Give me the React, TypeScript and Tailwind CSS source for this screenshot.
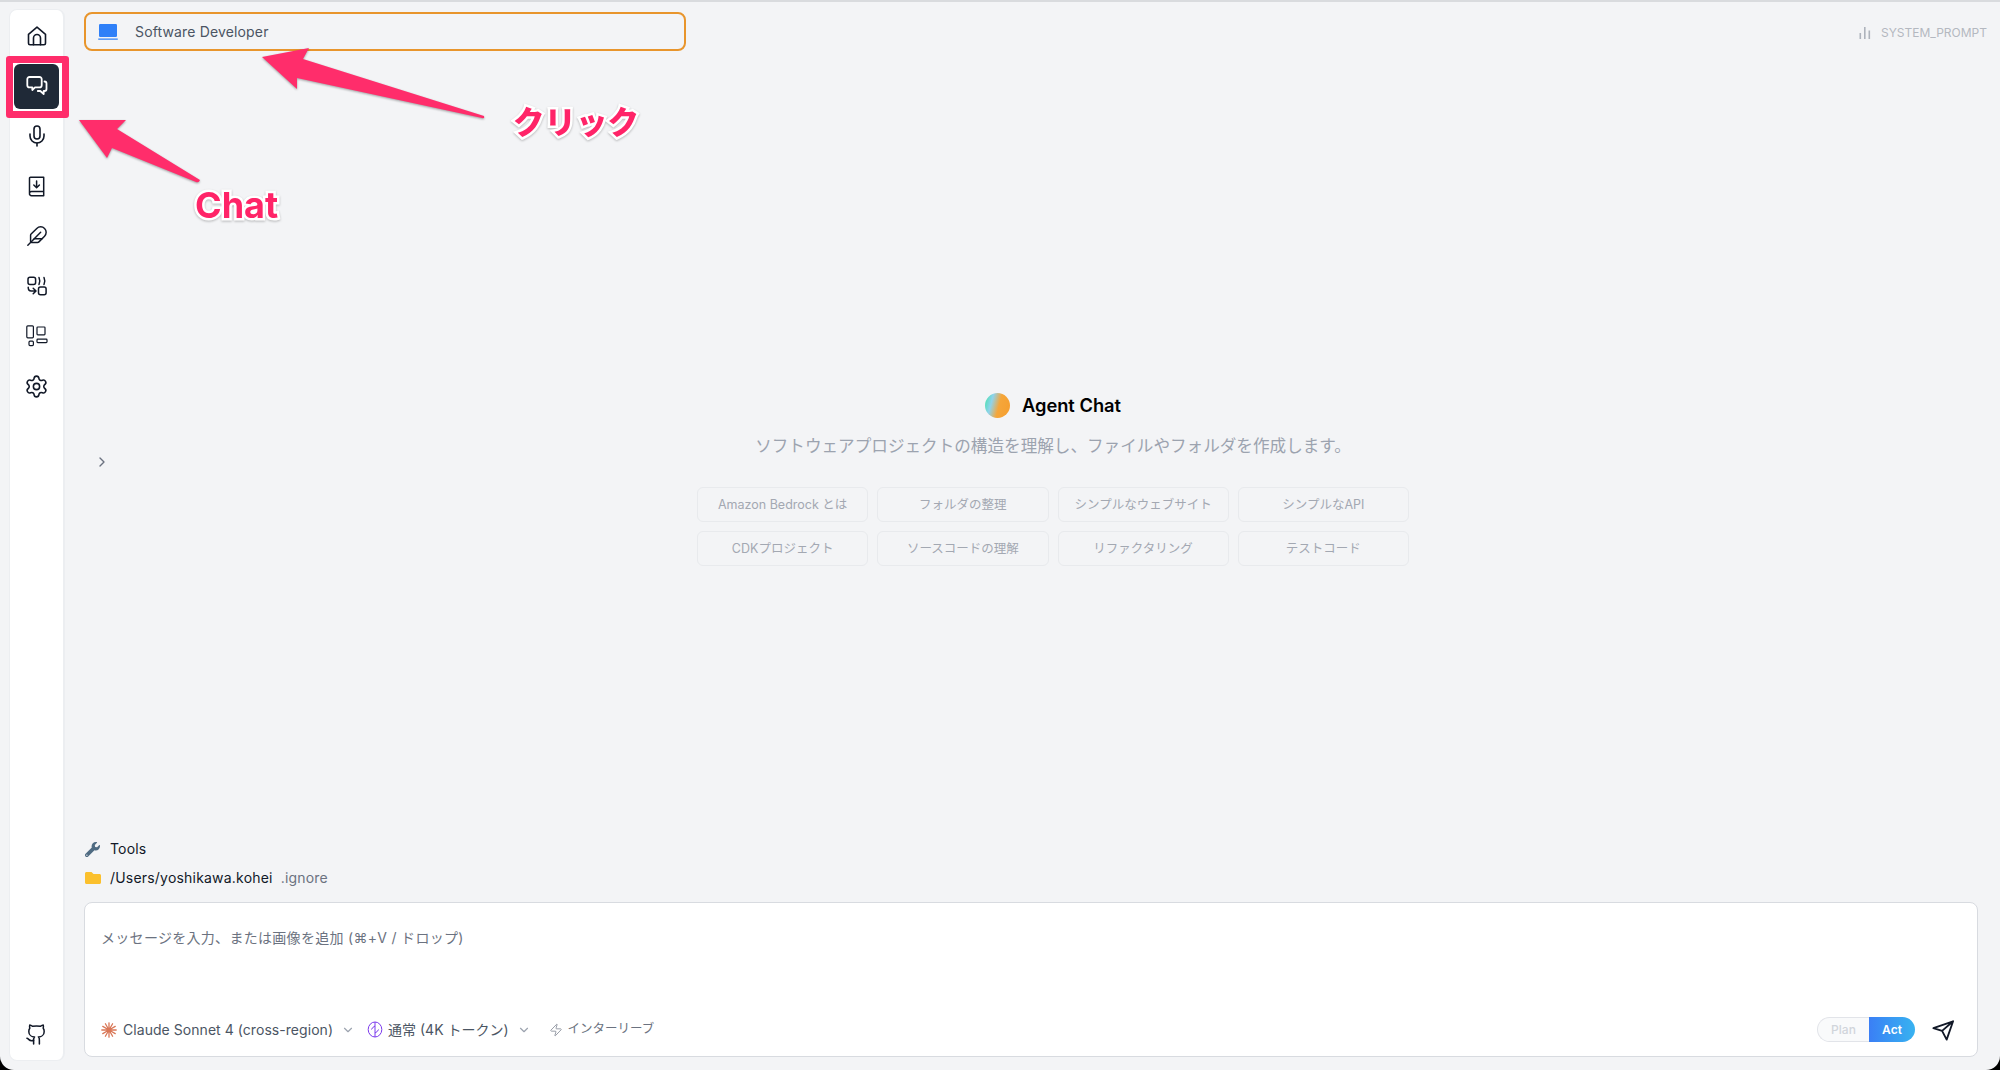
import { ChevronDown, ChevronRight, Feather, Github, Mic, Settings, Zap } from 'lucide-react'
import { FaFolder, FaWrench } from 'react-icons/fa'

const chips = [
  'Amazon Bedrock とは',
  'フォルダの整理',
  'シンプルなウェブサイト',
  'シンプルなAPI',
  'CDKプロジェクト',
  'ソースコードの理解',
  'リファクタリング',
  'テストコード',
]

function HomeIcon() {
  return (
    <svg width="20" height="20" viewBox="0 0 20 20" fill="none" stroke="currentColor" strokeWidth="1.6" strokeLinejoin="round" strokeLinecap="round">
      <path d="M10 1.200 18.500 8.300V17.300a1.500 1.500 0 0 1-1.500 1.500H3a1.500 1.500 0 0 1-1.500-1.500V8.300Z" />
      <path d="M6.500 18.800V12a3.500 3.500 0 0 1 7 0v6.800" />
    </svg>
  )
}

function ChatsIcon() {
  return (
    <svg width="22" height="22" viewBox="0 0 22 22" fill="none" stroke="currentColor" strokeWidth="1.800" strokeLinejoin="round" strokeLinecap="round">
      <path d="M3.500 2h10a2.200 2.200 0 0 1 2.200 2.200v6a2.200 2.200 0 0 1-2.200 2.200H9l-2.700 2.600v-2.600H3.500a2.200 2.200 0 0 1-2.200-2.200v-6A2.200 2.200 0 0 1 3.500 2Z" />
      <path d="M18.500 6.500a2 2 0 0 1 2 2v5.500a2 2 0 0 1-2 2h-.8v3l-3.400-3h-2.500" />
    </svg>
  )
}

function BookIcon() {
  return (
    <svg width="17" height="21" viewBox="0 0 17 21" fill="none" stroke="currentColor" strokeWidth="1.500" strokeLinejoin="round" strokeLinecap="round">
      <path d="M1.500 17.500V2.200a1 1 0 0 1 1-1h13.200v18.600H3.500a2 2 0 0 1-2-2.300 2 2 0 0 1 2-2h12.200" />
      <path d="M8.600 5v6.500M5.800 9l2.800 2.800L11.400 9" />
    </svg>
  )
}

function SwapIcon() {
  return (
    <svg width="20" height="20" viewBox="0 0 20 20" fill="none" stroke="currentColor" strokeWidth="1.500" strokeLinecap="round" strokeLinejoin="round">
      <rect x="1" y="1.200" width="7.600" height="7.400" rx="2" />
      <path d="M12 1.500q1.600 3.500 0 7M17 1.500q1.600 3.500 0 7" />
      <rect x="11.500" y="11" width="7.600" height="7.800" rx="2" />
      <path d="M1.200 11.200q0 3.800 3 3.800h4.600M6.200 12.200l2.800 2.800-2.800 2.800" />
    </svg>
  )
}

function PanelsIcon() {
  return (
    <svg width="22" height="22" viewBox="0 0 22 22" fill="none" stroke="currentColor" strokeWidth="1.200" strokeLinejoin="round">
      <rect x="0.800" y="0.800" width="6.600" height="12" rx="1" />
      <rect x="3" y="16.200" width="4.400" height="4.400" rx="1" />
      <rect x="11" y="2" width="8" height="7.800" rx="0.800" />
      <rect x="11" y="14.200" width="10" height="3.400" rx="0.800" />
    </svg>
  )
}

function LaptopIcon() {
  return (
    <svg width="20" height="16" viewBox="0 0 20 16" fill="#2f80f8">
      <rect x="1" y="0" width="18" height="13" rx="1.200" />
      <rect x="0" y="14.400" width="20" height="1.400" rx="0.700" />
    </svg>
  )
}

function BarsIcon() {
  return (
    <svg width="12" height="12" viewBox="0 0 12 12" fill="#aeb3bc">
      <rect x="0.500" y="6" width="1.600" height="6" />
      <rect x="5" y="0" width="1.600" height="12" />
      <rect x="9.500" y="3.500" width="1.600" height="8.500" />
    </svg>
  )
}

function ClaudeIcon() {
  const rays = [0, 30, 60, 90, 120, 150, 180, 210, 240, 270, 300, 330]
  return (
    <svg width="16" height="16" viewBox="0 0 16 16" stroke="#d97757" strokeWidth="1.300" strokeLinecap="round">
      {rays.map((r) => (
        <line key={r} x1="8" y1="8" x2="8" y2="0.800" transform={`rotate(${r} 8 8)`} />
      ))}
      <circle cx="8" cy="8" r="2.600" fill="#d97757" stroke="none" />
    </svg>
  )
}

function BrainIcon() {
  return (
    <svg width="16" height="17" viewBox="0 0 16 17" fill="none" stroke="#7c3aed" strokeWidth="1">
      <ellipse cx="8" cy="8.500" rx="6.800" ry="7.500" />
      <path d="M8 1v15M8 5Q5 6.500 4.500 8.500M8 12Q11 10.500 11.500 8.500" />
    </svg>
  )
}

function SendIcon() {
  return (
    <svg width="22" height="22" viewBox="0 0 24 24" fill="none" stroke="#111827" strokeWidth="2" strokeLinejoin="round" strokeLinecap="round">
      <path d="M1.500 10 23 2.500 16 22.500 11 13 1.500 10ZM11 13 23 2.500" />
    </svg>
  )
}

function Annotations() {
  return (
    <>
      <svg className="pointer-events-none absolute left-0 top-0 drop-shadow-[0_1px_1px_rgba(0,0,0,0.35)]" width="700" height="240" fill="#ff2d6b">
        <path d="M262 57 309 48 303 59 484 116Q485 119 482 118L297 78 297 89Z" />
        <path d="M79 120 126 120 117 129 200 180Q199 183 196 182L112 148 107 158Z" />
      </svg>
      <div className="absolute left-[6px] top-[56px] h-[62px] w-[63px] rounded-[3px] border-[7px] border-[#ff2d6b]" />
      <div className="absolute left-[513px] top-[101px] text-[31.500px] leading-[44px] font-black text-[#ff2468] [-webkit-text-stroke:5px_white] [paint-order:stroke_fill] drop-shadow-[0_1px_1px_rgba(0,0,0,0.25)]">
        クリック
      </div>
      <div className="absolute left-[195px] top-[184px] text-[36px] leading-[42px] font-bold text-[#ff2468] [-webkit-text-stroke:5px_white] [paint-order:stroke_fill] drop-shadow-[0_1px_1px_rgba(0,0,0,0.25)]">
        Chat
      </div>
    </>
  )
}

export default function App() {
  return (
    <div className="relative h-[1070px] w-[2000px] overflow-hidden bg-black font-['Inter','Noto_Sans_CJK_JP',sans-serif]">
      <div className="flex h-full rounded-b-[14px] border-t-2 border-[#d9dbde] bg-[#f3f4f6] pb-[9px] pl-[9px] pt-[7px]">
        {/* side nav */}
        <nav className="flex w-[56px] flex-col items-center rounded-[8px] border border-r-2 border-[#eceef1] bg-white pt-[1px] text-[#111827]">
          <div className="flex h-[50px] items-center justify-center"><HomeIcon /></div>
          <div className="flex h-[50px] items-center justify-center">
            <div className="flex h-[45px] w-[45px] items-center justify-center rounded-[6px] bg-[#1f2937] text-white">
              <ChatsIcon />
            </div>
          </div>
          <div className="flex h-[50px] items-center justify-center"><Mic size={24} strokeWidth={1.6} /></div>
          <div className="flex h-[50px] items-center justify-center"><BookIcon /></div>
          <div className="flex h-[50px] items-center justify-center"><Feather size={22} strokeWidth={1.6} /></div>
          <div className="flex h-[50px] items-center justify-center"><SwapIcon /></div>
          <div className="flex h-[50px] items-center justify-center"><PanelsIcon /></div>
          <div className="flex h-[50px] items-center justify-center"><Settings size={25} strokeWidth={1.5} /></div>
          <div className="mt-auto flex h-[50px] items-center justify-center pb-[2px]"><Github size={23} strokeWidth={1.6} /></div>
        </nav>

        {/* main */}
        <main className="ml-[19px] mr-[22px] flex flex-1 flex-col pb-[4px]">
          <div className="flex items-start justify-between pt-[3px]">
            <div className="flex h-[39px] w-[602px] items-center rounded-[8px] border-2 border-[#e8952c] pl-[12px] text-[14px] tracking-[0.15px] text-[#4b5563]">
              <LaptopIcon />
              <span className="ml-[17px]">Software Developer</span>
            </div>
            <div className="mr-[-9px] flex items-center gap-[10px] pt-[13px] text-[12px] leading-[16px] text-[#b4b8c0]">
              <BarsIcon />
              <span>SYSTEM_PROMPT</span>
            </div>
          </div>

          <section className="ml-[613px] mt-[342px] flex w-[712px] flex-col items-center">
            <div className="flex h-[25px] items-center">
              <div className="h-[25px] w-[25px] rounded-full bg-[linear-gradient(105deg,#3fe3a6_0%,#8fd3ec_28%,#f5a63a_55%,#f59e2e_100%)]" />
              <h1 className="ml-[12px] text-[18.300px] font-semibold text-black">Agent Chat</h1>
            </div>
            <p className="mt-[16px] text-[16.600px] leading-[24px] text-[#9ca3af]">
              ソフトウェアプロジェクトの構造を理解し、ファイルやフォルダを作成します。
            </p>
            <div className="mt-[29px] grid w-full grid-cols-4 gap-[9px]">
              {chips.map((c) => (
                <div key={c} className="flex h-[35px] items-center justify-center rounded-[6px] border border-[#e8eaed] pt-[1px] text-[12.500px] text-[#a3a8b2]">
                  {c}
                </div>
              ))}
            </div>
          </section>

          <div className="mt-auto flex items-center text-[14px] leading-[20px] text-[#111827]">
            <FaWrench size={15} className="ml-[1px] text-[#4f6b82]" />
            <span className="ml-[10px] tracking-[0.15px]">Tools</span>
          </div>
          <div className="mt-[9px] flex items-center text-[14px] leading-[20px] text-[#111827]">
            <FaFolder size={16} className="ml-[1px] text-[#fbc02d]" />
            <span className="ml-[9px] tracking-[0.2px]">/Users/yoshikawa.kohei</span>
            <span className="ml-[8px] tracking-[0.2px] text-[#6b7280]">.ignore</span>
          </div>

          <div className="mt-[14px] flex h-[155px] flex-col rounded-[8px] border border-[#d8dbe0] bg-white px-[16px]">
            <p className="mt-[25px] text-[14px] leading-[20px] tracking-[0.3px] text-[#6b7280]">メッセージを入力、または画像を追加 (⌘+V / ドロップ)</p>
            <div className="mb-[14px] mt-auto flex h-[25px] items-center text-[14px] text-[#4b5563]">
              <ClaudeIcon />
              <span className="ml-[6px] tracking-[0.05px]">Claude Sonnet 4 (cross-region)</span>
              <ChevronDown size={14} className="ml-[8px] text-[#9ca3af]" />
              <div className="ml-[12px]"><BrainIcon /></div>
              <span className="ml-[5px]">通常 (4K トークン)</span>
              <ChevronDown size={14} className="ml-[8px] text-[#9ca3af]" />
              <Zap size={14} strokeWidth={1.5} className="ml-[18px] text-[#8a909c]" />
              <span className="ml-[5px] text-[12.500px] text-[#6b7280]">インターリーブ</span>
              <div className="ml-auto flex h-[25px] w-[98px] text-[12px]">
                <div className="flex w-[52px] items-center justify-center rounded-l-full border border-r-0 border-[#e2e4e9] bg-[#f9fafb] font-medium text-[#d1d5db]">Plan</div>
                <div className="flex flex-1 items-center justify-center rounded-r-full bg-linear-to-r from-[#3b7ff5] to-[#38b2f0] font-semibold text-white">Act</div>
              </div>
              <div className="ml-[17px] mr-[7px]"><SendIcon /></div>
            </div>
          </div>
        </main>
      </div>

      <ChevronRight size={16} className="absolute left-[94px] top-[454px] text-[#6b7280]" />
      <Annotations />
    </div>
  )
}
